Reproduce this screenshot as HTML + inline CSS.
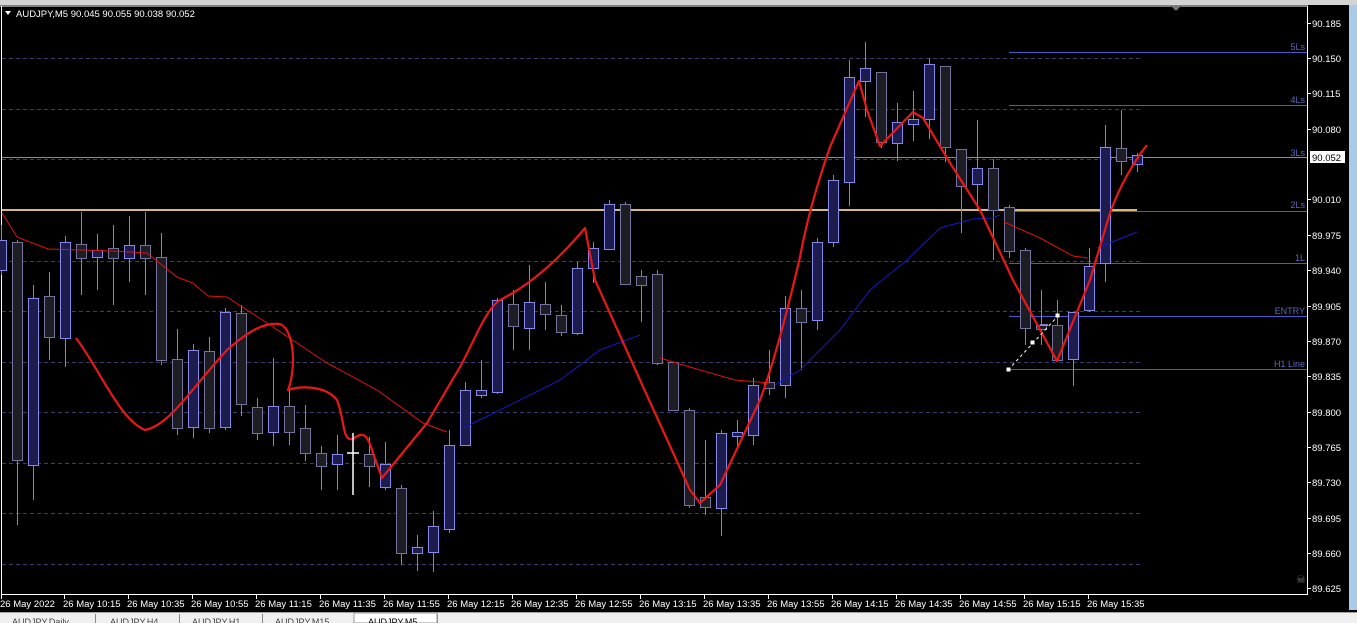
<!DOCTYPE html>
<html><head><meta charset="utf-8"><style>
html,body{margin:0;padding:0;width:1357px;height:623px;overflow:hidden;background:#000;font-family:"Liberation Sans",sans-serif}
svg{display:block}
.u{fill:#1c1c4e;stroke:#8888e8}
.d{fill:#1d1d24;stroke:#72729c}
.w{stroke:#8080d8}
text{font-family:"Liberation Sans",sans-serif}
</style></head><body>
<svg width="1357" height="623" viewBox="0 0 1357 623" xmlns="http://www.w3.org/2000/svg">
<rect x="0" y="0" width="1357" height="623" fill="#000"/>
<rect x="0" y="0" width="1357" height="5" fill="#d4d4d4"/>
<rect x="1349" y="5" width="8" height="605" fill="#a9cbe8"/>
<line x1="0" y1="6" x2="1308" y2="6" stroke="#fff"/>
<line x1="1.5" y1="6" x2="1.5" y2="595" stroke="#fff"/>
<line x1="1307.5" y1="6" x2="1307.5" y2="595" stroke="#fff"/>
<line x1="1" y1="594.5" x2="1308" y2="594.5" stroke="#fff"/>
<polygon points="1171,6 1181,6 1176,11" fill="#777"/>
<g stroke="#3c3c6c" stroke-dasharray="4,3" stroke-width="1">
<line x1="2" y1="58.5" x2="1140" y2="58.5"/><line x1="2" y1="109.5" x2="1140" y2="109.5"/>
<line x1="2" y1="159.5" x2="1140" y2="159.5"/><line x1="2" y1="261.5" x2="1140" y2="261.5"/>
<line x1="2" y1="311.5" x2="1140" y2="311.5"/><line x1="2" y1="362.5" x2="1140" y2="362.5"/>
<line x1="2" y1="412.5" x2="1140" y2="412.5"/><line x1="2" y1="463.5" x2="1140" y2="463.5"/>
<line x1="2" y1="513.5" x2="1140" y2="513.5"/><line x1="2" y1="564.5" x2="1140" y2="564.5"/>
</g>
<line x1="2" y1="157.5" x2="1307" y2="157.5" stroke="#8a8a9a"/>
<g stroke="#4a58c8"><line x1="1009" y1="52.5" x2="1307" y2="52.5"/><line x1="1009" y1="105.5" x2="1307" y2="105.5"/><line x1="1009" y1="211.5" x2="1307" y2="211.5"/><line x1="1009" y1="263.5" x2="1307" y2="263.5"/><line x1="1009" y1="316.5" x2="1307" y2="316.5"/><line x1="1009" y1="369.5" x2="1307" y2="369.5"/></g>
<g fill="#5a68c0" font-size="9" text-anchor="end"><text x="1305" y="50">5Ls</text><text x="1305" y="103">4Ls</text><text x="1305" y="156">3Ls</text><text x="1305" y="208">2Ls</text><text x="1305" y="261">1L</text><text x="1305" y="314">ENTRY</text><text x="1305" y="367">H1 Line</text></g>
<line x1="2" y1="210" x2="1137" y2="210" stroke="#d8b878" stroke-width="2"/>
<g stroke-width="1">
<path class="w" d="M1.5 225V275M17.5 240V525M33.5 285V500M49.5 272V360M65.5 236V367M81.5 212V295M97.5 234V290M113.5 225V305M129.5 216V282M145.5 212V295M161.5 233V365M177.5 329V435M193.5 344V438M209.5 337V433M225.5 308V430M241.5 305V416M257.5 398V440M273.5 358V446M289.5 390V445M305.5 405V461M321.5 446V490M337.5 435V490M369.5 437V487M385.5 442V490M401.5 485V565M417.5 535V571M433.5 511V572M449.5 430V533M465.5 382V445M481.5 360V398M497.5 298V394M513.5 290V350M529.5 265V350M545.5 282V330M561.5 305V336M577.5 262V335M593.5 242V283M609.5 200V250M625.5 202V285M641.5 270V322M657.5 270V365M673.5 362V410M689.5 408V508M705.5 440V515M721.5 430V536M737.5 420V450M753.5 378V445M769.5 350V395M785.5 296V398M801.5 290V370M817.5 238V330M833.5 175V247M849.5 60V206M865.5 42V117M881.5 72V148M897.5 103V161M913.5 91V141M929.5 58V139M945.5 66V162M961.5 149V233M977.5 120V210M993.5 159V260M1009.5 205V258M1025.5 248V345M1041.5 290V345M1057.5 300V362M1073.5 312V386M1089.5 248V312M1105.5 125V282M1121.5 110V175M1137.5 153V172"/>
<rect class="u" x="-3.5" y="240.5" width="10" height="30"/>
<rect class="d" x="12.5" y="242.5" width="10" height="218"/>
<rect class="u" x="28.5" y="298.5" width="10" height="167"/>
<rect class="d" x="44.5" y="296.5" width="10" height="41"/>
<rect class="u" x="60.5" y="242.5" width="10" height="96"/>
<rect class="d" x="76.5" y="244.5" width="10" height="14"/>
<rect class="u" x="92.5" y="250.5" width="10" height="7"/>
<rect class="d" x="108.5" y="248.5" width="10" height="10"/>
<rect class="u" x="124.5" y="245.5" width="10" height="13"/>
<rect class="d" x="140.5" y="245.5" width="10" height="13"/>
<rect class="d" x="156.5" y="257.5" width="10" height="103"/>
<rect class="d" x="172.5" y="359.5" width="10" height="69"/>
<rect class="u" x="188.5" y="350.5" width="10" height="77"/>
<rect class="d" x="204.5" y="351.5" width="10" height="77"/>
<rect class="u" x="220.5" y="312.5" width="10" height="115"/>
<rect class="d" x="236.5" y="313.5" width="10" height="91"/>
<rect class="d" x="252.5" y="407.5" width="10" height="26"/>
<rect class="u" x="268.5" y="406.5" width="10" height="26"/>
<rect class="d" x="284.5" y="406.5" width="10" height="26"/>
<rect class="d" x="300.5" y="428.5" width="10" height="25"/>
<rect class="d" x="316.5" y="453.5" width="10" height="13"/>
<rect class="u" x="332.5" y="454.5" width="10" height="10"/>
<rect class="d" x="364.5" y="454.5" width="10" height="12"/>
<rect class="u" x="380.5" y="464.5" width="10" height="23"/>
<rect class="d" x="396.5" y="488.5" width="10" height="65"/>
<rect class="u" x="412.5" y="547.5" width="10" height="6"/>
<rect class="u" x="428.5" y="526.5" width="10" height="26"/>
<rect class="u" x="444.5" y="445.5" width="10" height="84"/>
<rect class="u" x="460.5" y="390.5" width="10" height="55"/>
<rect class="u" x="476.5" y="390.5" width="10" height="5"/>
<rect class="u" x="492.5" y="300.5" width="10" height="92"/>
<rect class="d" x="508.5" y="304.5" width="10" height="22"/>
<rect class="u" x="524.5" y="302.5" width="10" height="26"/>
<rect class="d" x="540.5" y="304.5" width="10" height="10"/>
<rect class="d" x="556.5" y="315.5" width="10" height="17"/>
<rect class="u" x="572.5" y="268.5" width="10" height="65"/>
<rect class="u" x="588.5" y="248.5" width="10" height="20"/>
<rect class="u" x="604.5" y="204.5" width="10" height="45"/>
<rect class="d" x="620.5" y="204.5" width="10" height="80"/>
<rect class="d" x="636.5" y="276.5" width="10" height="9"/>
<rect class="d" x="652.5" y="274.5" width="10" height="89"/>
<rect class="d" x="668.5" y="362.5" width="10" height="48"/>
<rect class="d" x="684.5" y="410.5" width="10" height="95"/>
<rect class="d" x="700.5" y="497.5" width="10" height="10"/>
<rect class="u" x="716.5" y="433.5" width="10" height="75"/>
<rect class="u" x="732.5" y="432.5" width="10" height="4"/>
<rect class="u" x="748.5" y="385.5" width="10" height="50"/>
<rect class="d" x="764.5" y="382.5" width="10" height="6"/>
<rect class="u" x="780.5" y="308.5" width="10" height="77"/>
<rect class="d" x="796.5" y="308.5" width="10" height="14"/>
<rect class="u" x="812.5" y="242.5" width="10" height="78"/>
<rect class="u" x="828.5" y="180.5" width="10" height="62"/>
<rect class="u" x="844.5" y="77.5" width="10" height="105"/>
<rect class="u" x="860.5" y="68.5" width="10" height="13"/>
<rect class="d" x="876.5" y="72.5" width="10" height="70"/>
<rect class="u" x="892.5" y="122.5" width="10" height="21"/>
<rect class="u" x="908.5" y="119.5" width="10" height="5"/>
<rect class="u" x="924.5" y="64.5" width="10" height="55"/>
<rect class="d" x="940.5" y="66.5" width="10" height="81"/>
<rect class="d" x="956.5" y="149.5" width="10" height="37"/>
<rect class="u" x="972.5" y="168.5" width="10" height="16"/>
<rect class="d" x="988.5" y="168.5" width="10" height="42"/>
<rect class="d" x="1004.5" y="207.5" width="10" height="44"/>
<rect class="d" x="1020.5" y="250.5" width="10" height="78"/>
<rect class="d" x="1036.5" y="325.5" width="10" height="4"/>
<rect class="d" x="1052.5" y="325.5" width="10" height="35"/>
<rect class="u" x="1068.5" y="312.5" width="10" height="47"/>
<rect class="u" x="1084.5" y="266.5" width="10" height="44"/>
<rect class="u" x="1100.5" y="147.5" width="10" height="116"/>
<rect class="d" x="1116.5" y="148.5" width="10" height="13"/>
<rect class="u" x="1132.5" y="155.5" width="10" height="9"/>
</g>
<g fill="none" stroke="#e01010" stroke-width="1">
<polyline points="2,213 17,237 48,249 82,250 113,251 147,253 177,277 193,283 208,296 227,297 267,323 327,363 377,390 423,423 447,432"/>
<polyline points="660,358 700,370 735,380 770,383"/>
<polyline points="1004,222 1040,238 1073,256 1088,258"/>
</g>
<g fill="none" stroke="#1818c8" stroke-width="1">
<polyline points="463,428 500,410 560,380 600,350 640,335"/>
<polyline points="775,385 800,370 840,330 870,290 907,260 940,228 973,219 992,218 1000,215"/>
<polyline points="1097,248 1137,232"/>
</g>
<path fill="none" stroke="#e81818" stroke-width="2.2" stroke-linejoin="round" d="M76,338 C100,370 120,420 145,430 C170,425 190,390 227,350 C250,330 265,322 280,324 C295,330 296,370 288,390 C300,386 325,385 337,400 C345,420 342,442 353,439 C362,432 367,432 373,453 L382,478 L427,423 L460,367 C475,340 485,310 500,300 C520,290 550,270 585,228 L595,280 L640,380 L690,490 L700,503 L720,485 L760,400 C775,360 790,300 800,257 C805,230 815,190 830,147 L859,81 L867,110 L880,146 L913,112 L923,118 L950,163 L980,210 L1013,280 L1057,361 L1090,280 L1110,213 C1120,185 1135,160 1147,145"/>
<g stroke="#fff" fill="#fff"><line x1="353" y1="433" x2="353" y2="495" stroke-width="1.5"/><line x1="347" y1="453" x2="359" y2="453" stroke-width="1.5"/>
<line x1="1008" y1="370" x2="1058" y2="316" stroke-dasharray="3,3"/><rect x="1031" y="341" width="3" height="3"/><rect x="1056" y="314" width="3" height="3"/><rect x="1007" y="368" width="3" height="3"/><line x1="1040" y1="325" x2="1048" y2="325" stroke="#8080d8" stroke-width="2"/></g>
<text x="1296" y="583" fill="#777" font-size="11">☠</text>
<polygon points="5,11 11,11 8,15" fill="#fff"/>
<text x="16" y="17" fill="#fff" font-size="9.5">AUDJPY,M5  90.045 90.055 90.038 90.052</text>
<g fill="#fff" font-size="9.5">
<text x="1312" y="27">90.185</text><text x="1312" y="62">90.150</text><text x="1312" y="97">90.115</text><text x="1312" y="133">90.080</text><text x="1312" y="203">90.010</text><text x="1312" y="239">89.975</text><text x="1312" y="274">89.940</text><text x="1312" y="310">89.905</text><text x="1312" y="345">89.870</text><text x="1312" y="380">89.835</text><text x="1312" y="416">89.800</text><text x="1312" y="451">89.765</text><text x="1312" y="486">89.730</text><text x="1312" y="522">89.695</text><text x="1312" y="557">89.660</text><text x="1312" y="592">89.625</text>
</g>
<g stroke="#fff"><path d="M1308 23.5h3M1308 58.5h3M1308 93.5h3M1308 129.5h3M1308 199.5h3M1308 235.5h3M1308 270.5h3M1308 306.5h3M1308 341.5h3M1308 376.5h3M1308 412.5h3M1308 447.5h3M1308 482.5h3M1308 518.5h3M1308 553.5h3M1308 588.5h3"/></g>
<rect x="1310" y="151" width="35" height="12" fill="#fff"/>
<text x="1312" y="161" fill="#000" font-size="9.5">90.052</text>
<g stroke="#fff"><path d="M1.5 595v4M64.5 595v4M128.5 595v4M192.5 595v4M256.5 595v4M320.5 595v4M384.5 595v4M448.5 595v4M512.5 595v4M576.5 595v4M640.5 595v4M704.5 595v4M768.5 595v4M832.5 595v4M896.5 595v4M960.5 595v4M1024.5 595v4M1088.5 595v4"/></g>
<g fill="#fff" font-size="9.5">
<text x="0" y="607">26 May 2022</text><text x="63" y="607">26 May 10:15</text><text x="127" y="607">26 May 10:35</text><text x="191" y="607">26 May 10:55</text><text x="255" y="607">26 May 11:15</text><text x="319" y="607">26 May 11:35</text><text x="383" y="607">26 May 11:55</text><text x="447" y="607">26 May 12:15</text><text x="511" y="607">26 May 12:35</text><text x="575" y="607">26 May 12:55</text><text x="639" y="607">26 May 13:15</text><text x="703" y="607">26 May 13:35</text><text x="767" y="607">26 May 13:55</text><text x="831" y="607">26 May 14:15</text><text x="895" y="607">26 May 14:35</text><text x="959" y="607">26 May 14:55</text><text x="1023" y="607">26 May 15:15</text><text x="1087" y="607">26 May 15:35</text>
</g>
<rect x="0" y="612" width="1357" height="11" fill="#f0f0f0"/>
<line x1="0" y1="612.5" x2="1357" y2="612.5" stroke="#a0a0a0"/>
<g stroke="#888"><path d="M95.5 614v9M179.5 614v9M262.5 614v9M437.5 614v9"/></g>
<rect x="354" y="613" width="83" height="10" fill="#fff" stroke="#999"/>
<g fill="#444" font-size="9"><text x="12" y="625">AUDJPY,Daily</text><text x="110" y="625">AUDJPY,H4</text><text x="192" y="625">AUDJPY,H1</text><text x="275" y="625">AUDJPY,M15</text><text x="368" y="625" fill="#000">AUDJPY,M5</text></g>
</svg>
</body></html>
